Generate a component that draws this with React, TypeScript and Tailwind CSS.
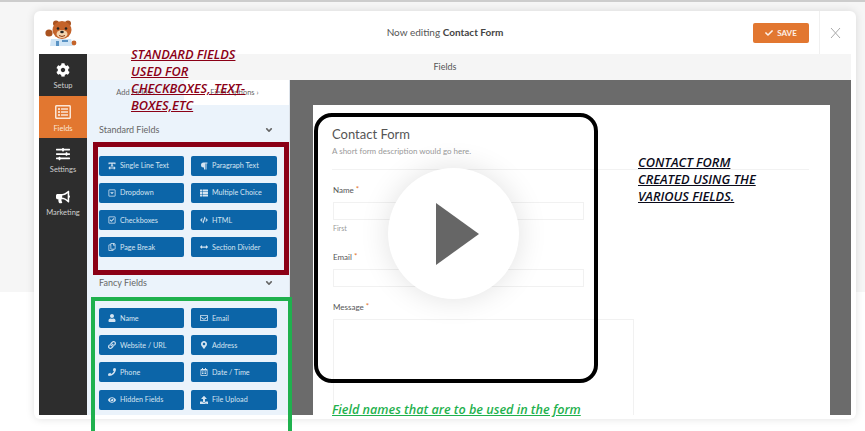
import React from "react";
import {
  FaCog, FaRegListAlt, FaSlidersH, FaBullhorn, FaTextWidth, FaParagraph, FaRegCaretSquareDown, FaThList,
  FaRegCheckSquare, FaCode, FaRegCopy, FaArrowsAltH, FaUser, FaRegEnvelope, FaLink, FaMapMarkerAlt, FaPhone,
  FaRegCalendarAlt, FaEye, FaUpload, FaCheck, FaAngleDown,
} from "react-icons/fa";

type Item = { label: string; icon: React.ReactNode };

const I = "text-[8px] shrink-0";

const standard: Item[] = [
  { label: "Single Line Text", icon: <FaTextWidth className={I} /> },
  { label: "Paragraph Text", icon: <FaParagraph className={I} /> },
  { label: "Dropdown", icon: <FaRegCaretSquareDown className={I} /> },
  { label: "Multiple Choice", icon: <FaThList className={I} /> },
  { label: "Checkboxes", icon: <FaRegCheckSquare className={I} /> },
  { label: "HTML", icon: <FaCode className={I} /> },
  { label: "Page Break", icon: <FaRegCopy className={I} /> },
  { label: "Section Divider", icon: <FaArrowsAltH className={I} /> },
];

const fancy: Item[] = [
  { label: "Name", icon: <FaUser className={I} /> },
  { label: "Email", icon: <FaRegEnvelope className={I} /> },
  { label: "Website / URL", icon: <FaLink className={I} /> },
  { label: "Address", icon: <FaMapMarkerAlt className={I} /> },
  { label: "Phone", icon: <FaPhone className={I} /> },
  { label: "Date / Time", icon: <FaRegCalendarAlt className={I} /> },
  { label: "Hidden Fields", icon: <FaEye className={I} /> },
  { label: "File Upload", icon: <FaUpload className={I} /> },
];

function FieldGrid({ items }: { items: Item[] }) {
  return (
    <div className="grid grid-cols-[85px_86px] gap-x-[7px] gap-y-[7.1px] pl-[12px]">
      {items.map((it) => (
        <div key={it.label} className="h-[20px] rounded-[2px] bg-[#0c65a8] text-[#d5e4f1] flex items-center pl-[8px] gap-[3px] text-[7.2px] leading-none whitespace-nowrap">
          <span className="w-[10px] flex justify-center">{it.icon}</span>
          <span>{it.label}</span>
        </div>
      ))}
    </div>
  );
}

function SideItem({ icon, label, active, h }: { icon: React.ReactNode; label: string; active?: boolean; h: string }) {
  return (
    <div className={`${h} flex flex-col items-center justify-center gap-[5px] pt-[2px] text-[7.5px] leading-none ${active ? "bg-[#e27730] text-[#fbe6d6]" : "text-[#cfcfcf]"}`}>
      <span className={active ? "text-[#fbe6d6] text-[16px]" : "text-white text-[14px]"}>{icon}</span>
      <span>{label}</span>
    </div>
  );
}

function Label({ text }: { text: string }) {
  return (
    <div className="text-[8px] leading-none text-[#555]">
      {text} <span className="text-[#e27730] relative -top-[1px]">*</span>
    </div>
  );
}

function Bear() {
  return (
    <svg width="32" height="28" viewBox="0 0 32 28">
      <path d="M6 19h20l2 7H5z" fill="#cfe4f5" />
      <rect x="11" y="21" width="3" height="5" fill="#5a93c4" />
      <rect x="17" y="20" width="6" height="2" fill="#5a93c4" />
      <circle cx="11" cy="3.5" r="3" fill="#a9521f" />
      <circle cx="23" cy="3.5" r="3" fill="#a9521f" />
      <ellipse cx="17" cy="10" rx="9.5" ry="9" fill="#c4632a" />
      <ellipse cx="17" cy="14" rx="5.5" ry="4" fill="#f3d3ae" />
      <circle cx="13" cy="8.5" r="1.3" fill="#222" />
      <circle cx="21" cy="8.5" r="1.3" fill="#222" />
      <ellipse cx="17" cy="12" rx="1.8" ry="1.2" fill="#222" />
      <path d="M14 15.5q3 2 6 0" stroke="#8a3a14" strokeWidth="1" fill="none" />
      <circle cx="4" cy="13" r="3.6" fill="#a9521f" />
      <circle cx="29" cy="23" r="2.4" fill="#c4632a" />
    </svg>
  );
}

export default function App() {
  return (
    <div className="relative w-[865px] h-[431px] overflow-hidden bg-[linear-gradient(#f6f6f6_290px,#ffffff_290px)] font-['Lato',sans-serif] border-t-2 border-[#cdcdcd]">
      <div className="ml-[34px] mt-[9px] w-[822px] h-[408px] bg-white rounded-[6px] shadow-[0_0_8px_rgba(0,0,0,0.12)] px-[5px] pb-[4px] flex flex-col">
        <div className="h-[43px] shrink-0 flex items-center">
          <div className="ml-[6px] mt-[3px]"><Bear /></div>
          <div className="flex-1 text-center text-[10px] text-[#555] pl-[60px]">
            Now editing <span className="font-bold text-[#444]">Contact Form</span>
          </div>
          <div className="w-[56px] h-[20px] bg-[#e27730] rounded-[2px] text-white/90 text-[8px] font-bold flex items-center justify-center gap-[4px] mr-[10px]">
            <FaCheck className="text-[8px]" /> SAVE
          </div>
          <div className="w-[32px] h-[43px] border-l border-[#f0f0f0] flex items-center justify-center text-[#aaa]">
            <svg width="11" height="12" viewBox="0 0 11 12"><path d="M1 1l9 10M10 1l-9 10" stroke="currentColor" strokeWidth="1" fill="none" /></svg>
          </div>
        </div>

        <div className="flex-1 flex min-h-0">
          <div className="w-[48px] shrink-0 bg-[#2d2d2d] flex flex-col">
            <SideItem h="h-[42px]" icon={<FaCog />} label="Setup" />
            <SideItem h="h-[42px]" icon={<FaRegListAlt />} label="Fields" active />
            <SideItem h="h-[43px]" icon={<FaSlidersH />} label="Settings" />
            <SideItem h="h-[43px]" icon={<FaBullhorn />} label="Marketing" />
          </div>

          <div className="flex-1 flex flex-col min-w-0">
            <div className="h-[26px] shrink-0 bg-[#f5f5f5] flex items-center justify-center text-[9px] text-[#555] pr-[48px]">Fields</div>
            <div className="flex-1 flex min-h-0">
              <div className="w-[203px] shrink-0 bg-[#ebf3fb] border-r border-[#dde3ea] flex flex-col overflow-hidden">
                <div className="h-[25px] shrink-0 flex text-[7.5px] text-[#666]">
                  <div className="w-[97px] flex items-center justify-center">Add Fields ›</div>
                  <div className="flex-1 bg-white flex items-center justify-center pr-[4px]">Field Options ›</div>
                </div>
                <div className="h-[51px] shrink-0 flex items-center justify-between pl-[12px] pr-[15px] text-[9px] text-[#666] pb-[2px]">
                  <span>Standard Fields</span>
                  <FaAngleDown className="text-[10px]" />
                </div>
                <FieldGrid items={standard} />
                <div className="h-[51px] shrink-0 flex items-center justify-between pl-[12px] pr-[15px] text-[9px] text-[#666]">
                  <span>Fancy Fields</span>
                  <FaAngleDown className="text-[10px]" />
                </div>
                <FieldGrid items={fancy} />
              </div>

              <div className="flex-1 bg-[#6b6b6b] pt-[25px] pl-[23px] pr-[21px] min-w-0">
                <div className="h-full bg-white pl-[19px] pr-[21px] pt-[23px] overflow-hidden">
                  <div className="text-[13px] leading-none text-[#555]">Contact Form</div>
                  <div className="text-[8px] leading-none text-[#999] mt-[6px] mb-[14px]">A short form description would go here.</div>
                  <div className="border-t border-[#f2f2f2] mb-[16px]" />
                  <div className="pl-[1px]">
                    <Label text="Name" />
                    <div className="w-[251px] h-[18px] border border-[#f1f1f1] mt-[8px]" />
                    <div className="text-[7px] leading-none text-[#999] mt-[5px] mb-[21px]">First</div>
                    <Label text="Email" />
                    <div className="w-[251px] h-[18px] border border-[#f1f1f1] mt-[8px] mb-[16px]" />
                    <Label text="Message" />
                    <div className="w-[301px] h-[120px] border border-[#f1f1f1] mt-[8px]" />
                  </div>
                </div>
              </div>
            </div>
          </div>
        </div>
      </div>

      {/* annotations drawn over the screenshot */}
      <div className="absolute left-[93px] top-[140px] w-[196px] h-[133px] border-[5px] border-[#8b0016]" />
      <div className="absolute left-[91px] top-[295px] w-[201px] h-[150px] border-[4px] border-[#1fb14e]" />
      <div className="absolute left-[314px] top-[111px] w-[284px] h-[270px] border-[4px] border-black rounded-[18px]" />
      <div className="absolute left-[388px] top-[166px] w-[131px] h-[131px] rounded-full bg-white shadow-[0_0_30px_rgba(0,0,0,0.12)] flex items-center justify-center">
        <svg width="43" height="62" viewBox="0 0 43 62" className="ml-[8px]"><path d="M0 0L43 31L0 62Z" fill="#666666" /></svg>
      </div>
      <div className="absolute left-[131px] top-[44px] w-[130px] font-['Open_Sans',sans-serif] italic font-semibold text-[12.8px] leading-[17px] text-[#8b0016] underline">
        STANDARD FIELDS<br />USED FOR<br />CHECKBOXES, TEXT-<br />BOXES,ETC
      </div>
      <div className="absolute left-[638px] top-[152px] font-['Open_Sans',sans-serif] italic font-semibold text-[12.8px] leading-[17px] text-[#0b0b1a] underline whitespace-nowrap">
        CONTACT FORM<br />CREATED USING THE<br />VARIOUS FIELDS.
      </div>
      <div className="absolute left-[332px] top-[399px] font-['Open_Sans',sans-serif] italic font-semibold text-[12.6px] leading-[17px] text-[#1fb14e] underline whitespace-nowrap">
        Field names that are to be used in the form
      </div>
    </div>
  );
}
